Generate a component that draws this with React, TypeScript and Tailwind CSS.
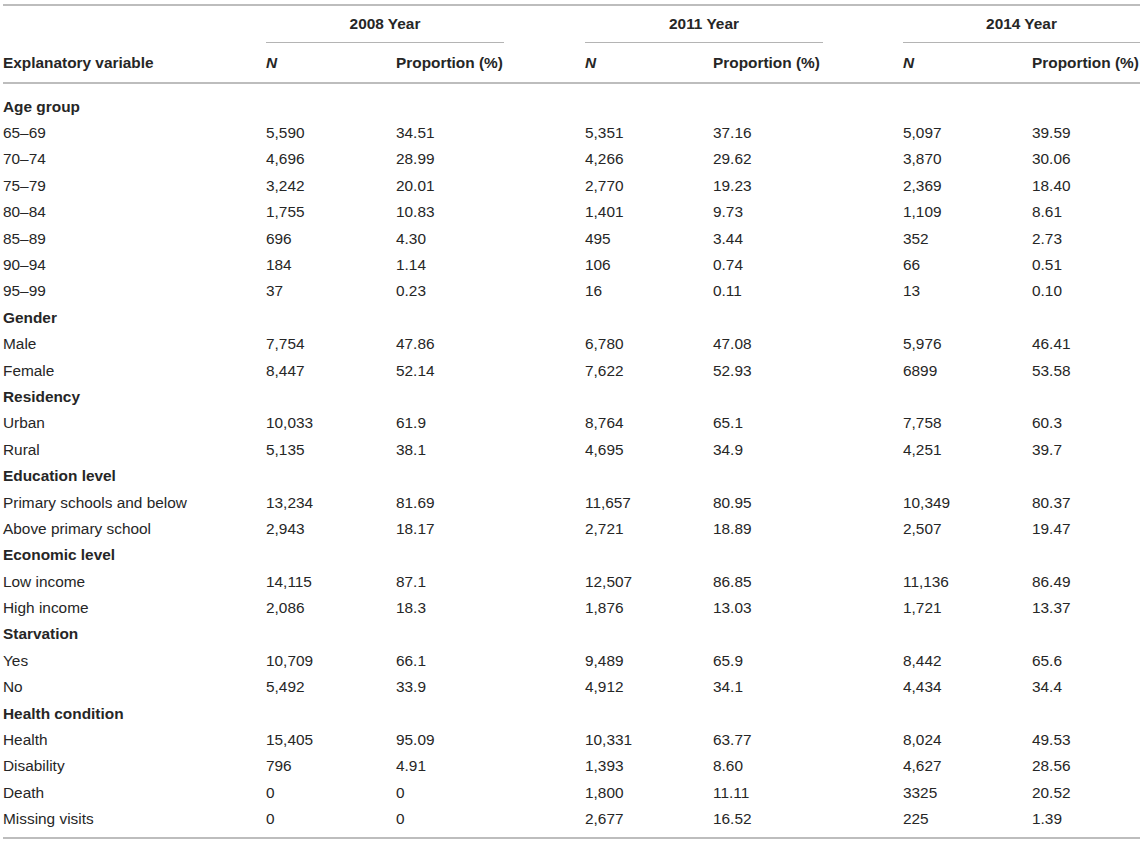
const groups: { title: string; rows: string[][] }[] = [
  {
    title: "Age group",
    rows: [
      ["65–69", "5,590", "34.51", "5,351", "37.16", "5,097", "39.59"],
      ["70–74", "4,696", "28.99", "4,266", "29.62", "3,870", "30.06"],
      ["75–79", "3,242", "20.01", "2,770", "19.23", "2,369", "18.40"],
      ["80–84", "1,755", "10.83", "1,401", "9.73", "1,109", "8.61"],
      ["85–89", "696", "4.30", "495", "3.44", "352", "2.73"],
      ["90–94", "184", "1.14", "106", "0.74", "66", "0.51"],
      ["95–99", "37", "0.23", "16", "0.11", "13", "0.10"],
    ],
  },
  {
    title: "Gender",
    rows: [
      ["Male", "7,754", "47.86", "6,780", "47.08", "5,976", "46.41"],
      ["Female", "8,447", "52.14", "7,622", "52.93", "6899", "53.58"],
    ],
  },
  {
    title: "Residency",
    rows: [
      ["Urban", "10,033", "61.9", "8,764", "65.1", "7,758", "60.3"],
      ["Rural", "5,135", "38.1", "4,695", "34.9", "4,251", "39.7"],
    ],
  },
  {
    title: "Education level",
    rows: [
      ["Primary schools and below", "13,234", "81.69", "11,657", "80.95", "10,349", "80.37"],
      ["Above primary school", "2,943", "18.17", "2,721", "18.89", "2,507", "19.47"],
    ],
  },
  {
    title: "Economic level",
    rows: [
      ["Low income", "14,115", "87.1", "12,507", "86.85", "11,136", "86.49"],
      ["High income", "2,086", "18.3", "1,876", "13.03", "1,721", "13.37"],
    ],
  },
  {
    title: "Starvation",
    rows: [
      ["Yes", "10,709", "66.1", "9,489", "65.9", "8,442", "65.6"],
      ["No", "5,492", "33.9", "4,912", "34.1", "4,434", "34.4"],
    ],
  },
  {
    title: "Health condition",
    rows: [
      ["Health", "15,405", "95.09", "10,331", "63.77", "8,024", "49.53"],
      ["Disability", "796", "4.91", "1,393", "8.60", "4,627", "28.56"],
      ["Death", "0", "0", "1,800", "11.11", "3325", "20.52"],
      ["Missing visits", "0", "0", "2,677", "16.52", "225", "1.39"],
    ],
  },
];

const cols = "grid grid-cols-[263px_130px_189px_128px_190px_129px_108px]";

function YearHead({ year }: { year: string }) {
  return (
    <div className="col-span-2 flex h-[37px]">
      <div className="flex w-[238px] items-center justify-center border-b border-[#b4b4b4] font-bold">
        {year} Year
      </div>
    </div>
  );
}

export default function App() {
  return (
    <div className="min-h-[843px] bg-white pt-[4px] pl-[3px] text-[15.4px] text-[#262626] [font-family:'Liberation_Sans',Arial,sans-serif]">
      <div className="w-[1137px] border-y-2 border-[#bdbdbd]">
        <div className={cols}>
          <div className="h-[37px]" />
          <YearHead year="2008" />
          <YearHead year="2011" />
          <YearHead year="2014" />
        </div>
        <div className={`${cols} h-[41px] items-center border-b-2 border-[#bdbdbd] font-bold`}>
          <div>Explanatory variable</div>
          <div className="italic">N</div>
          <div>Proportion (%)</div>
          <div className="italic">N</div>
          <div>Proportion (%)</div>
          <div className="italic">N</div>
          <div>Proportion (%)</div>
        </div>
        <div className="pt-[9px] pb-[5px]">
          {groups.map((g) => (
            <div key={g.title}>
              <div className="flex h-[26.4px] items-center font-bold">{g.title}</div>
              {g.rows.map((r) => (
                <div key={r[0]} className={`${cols} h-[26.4px] items-center`}>
                  {r.map((c, i) => (
                    <div key={i}>{c}</div>
                  ))}
                </div>
              ))}
            </div>
          ))}
        </div>
      </div>
    </div>
  );
}
